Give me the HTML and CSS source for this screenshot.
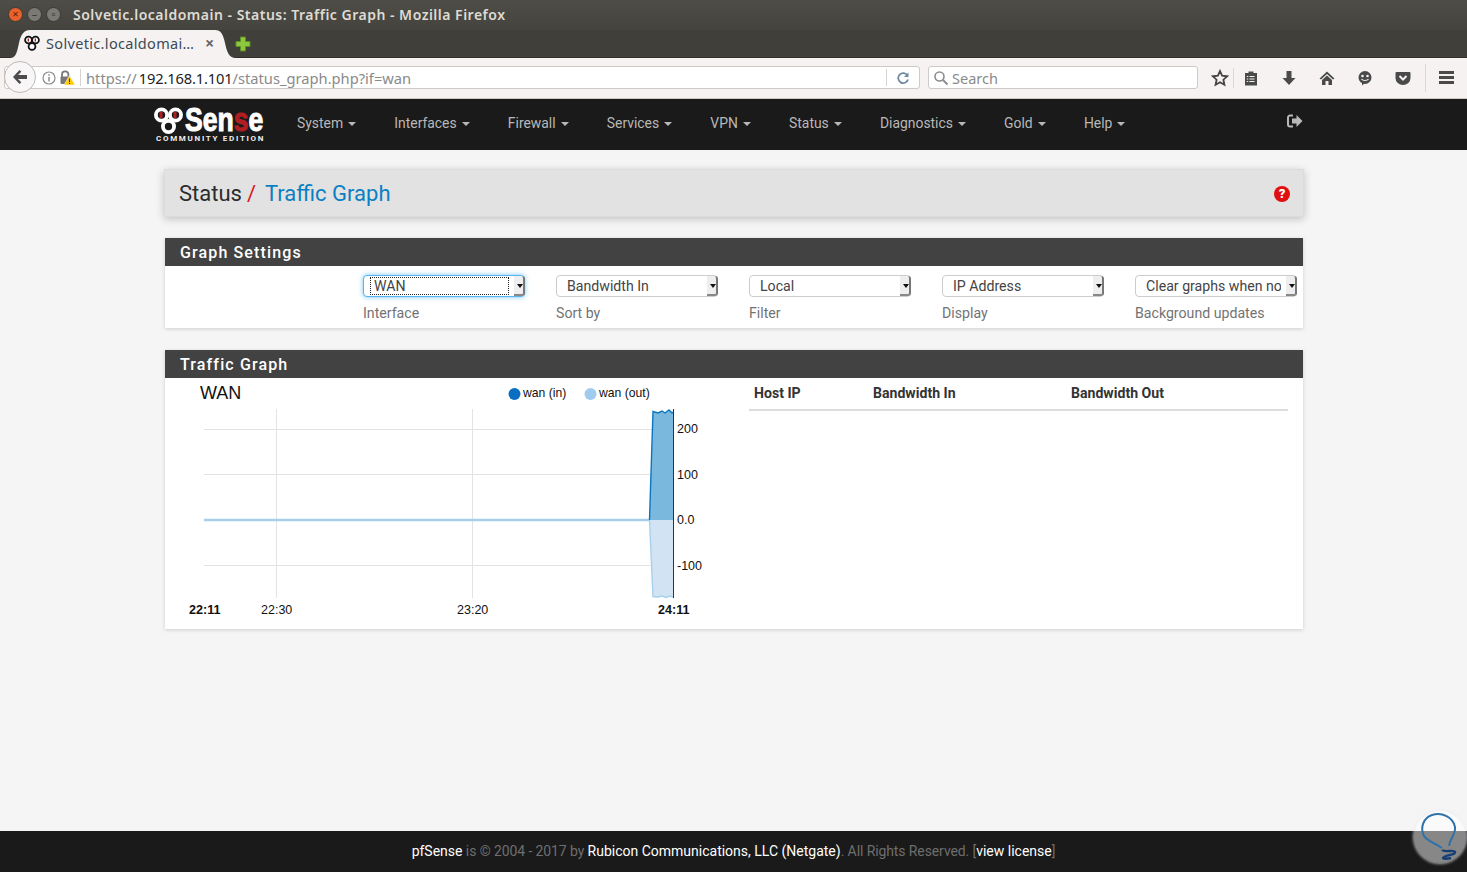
FILE: index.html
```html
<!DOCTYPE html>
<html lang="en">
<head>
<meta charset="utf-8">
<title>Solvetic.localdomain - Status: Traffic Graph</title>
<link rel="stylesheet" href="styles.css">
</head>
<body>
<header class="chrome">
  <div class="titlebar">
    <div class="winbtns">
      <span class="winbtn close">×</span>
      <span class="winbtn">–</span>
      <span class="winbtn">▫</span>
    </div>
    <span class="wintitle">Solvetic.localdomain - Status: Traffic Graph - Mozilla Firefox</span>
  </div>
  <div class="tabstrip">
    <div class="tab">
      <svg class="favicon" viewBox="0 0 16 16" width="16" height="16"><g fill="#fff" stroke="#111" stroke-width="1.8"><circle cx="4.5" cy="5" r="3.4"/><circle cx="11.5" cy="5" r="3.4"/><circle cx="8" cy="11.5" r="3.4"/></g><path d="M4.3 3.5v3M11.3 3.5v3" stroke="#a11" stroke-width="1.3"/></svg>
      <span class="tabtitle">Solvetic.localdomai…</span>
      <span class="tabclose">×</span>
    </div>
    <svg class="newtab" viewBox="0 0 16 16" width="16" height="16"><path d="M5.5 1h5v4.500h4.500v5h-4.500v4.500h-5v-4.500h-4.500v-5h4.500z" fill="#8dc63f" stroke="#5c8f22" stroke-width="1"/></svg>
  </div>
  <div class="toolbar">
    <div class="urlbar">
      <span class="backbtn"><svg viewBox="0 0 18 18" width="18" height="18"><path d="M8.500 2 2 9l6.500 7 1.800-1.800L7 11h9V7H7l3.300-3.200z" fill="#4c4c4c"/></svg></span>
      <svg class="infoicon" viewBox="0 0 14 14" width="14" height="14"><circle cx="7" cy="7" r="6" fill="none" stroke="#8c8c8c" stroke-width="1.200"/><path d="M7 6v4.500M7 3.300v1.500" stroke="#8c8c8c" stroke-width="1.500"/></svg>
      <svg class="lockicon" viewBox="0 0 16 16" width="16" height="16"><path d="M3 7V4.500a3.200 3.200 0 0 1 6.400 0V7" fill="none" stroke="#777" stroke-width="1.800"/><rect x="1.500" y="6.500" width="9" height="7.500" rx="1" fill="#777"/><path d="M10.500 5.500 16 15H5z" fill="#fc0" stroke="#f6f2f2" stroke-width=".6"/><path d="M10.500 8.500v3.500M10.500 12.800v1.200" stroke="#333" stroke-width="1"/></svg>
      <span class="urlsep"></span>
      <span class="urltext">https://<b class="urlhost">192.168.1.101</b>/status_graph.php?if=wan</span>
      <span class="urlsep reloadsep"></span>
      <svg class="reload" viewBox="0 0 14 14" width="14" height="14"><path d="M11.500 4.500A5 5 0 1 0 12 8.500" fill="none" stroke="#6d8aa3" stroke-width="1.800"/><path d="M12.500 1.500v4.500H8z" fill="#6d8aa3"/></svg>
    </div>
    <div class="searchbar">
      <svg viewBox="0 0 16 16" width="16" height="16"><circle cx="6.500" cy="6.500" r="4.500" fill="none" stroke="#8c8c8c" stroke-width="1.600"/><path d="m10 10 4.500 4.500" stroke="#8c8c8c" stroke-width="2"/></svg>
      <span>Search</span>
    </div>
    <div class="tools">
      <svg class="tool star" viewBox="0 0 18 18" width="18" height="18"><path d="m9 2 2.100 4.700 5 .6-3.700 3.400 1 5L9 13.200l-4.400 2.500 1-5L1.900 7.300l5-.6z" fill="none" stroke="#444" stroke-width="1.800"/></svg>
      <span class="toolsep"></span>
      <svg class="tool clip" viewBox="0 0 16 16" width="16" height="16"><path d="M2 3h3.500V1.500h5V3H14v12.500H2z" fill="#4a4a4a"/><path d="M6.500 6.500h5M6.500 9h5M6.500 11.500h5M3.800 6.500h1.500M3.800 9h1.500M3.800 11.500h1.500" stroke="#f6f2f2" stroke-width="1.200"/></svg>
      <svg class="tool down" viewBox="0 0 16 16" width="16" height="16"><path d="M5.500 1h5v7h4L8 15 1.500 8h4z" fill="#4a4a4a"/></svg>
      <svg class="tool home" viewBox="0 0 16 16" width="16" height="16"><path d="M8 1.500 0.500 8.500 2 9.500 8 4l6 5.500 1.500-1z" fill="#4a4a4a"/><path d="M3 10 8 5.500l5 4.500v5H9.500v-4h-3v4H3z" fill="#4a4a4a"/></svg>
      <svg class="tool smile" viewBox="0 0 16 16" width="16" height="16"><circle cx="8" cy="7.500" r="6.500" fill="#4a4a4a"/><circle cx="5.500" cy="6" r="1.300" fill="#f6f2f2"/><circle cx="10.500" cy="6" r="1.300" fill="#f6f2f2"/><path d="M4.500 9c1.500 2 5.500 2 7 0" fill="none" stroke="#f6f2f2" stroke-width="1.200"/><path d="M5 13h3l-3 2.500z" fill="#4a4a4a"/></svg>
      <svg class="tool pocket" viewBox="0 0 16 16" width="16" height="16"><path d="M1.500 2h13a1 1 0 0 1 1 1v5a7.500 7 0 0 1-15 0V3a1 1 0 0 1 1-1z" fill="#4a4a4a"/><path d="m4.500 6 3.500 3.500L11.500 6" fill="none" stroke="#f6f2f2" stroke-width="2"/></svg>
      <span class="toolsep last"></span>
      <span class="hamburger"><i></i><i></i><i></i></span>
    </div>
  </div>
</header>

<nav class="topnav">
  <a class="brand">
    <svg class="brandmark" viewBox="0 0 30 28" width="30" height="28"><g fill="none" stroke="#fff" stroke-width="3.800"><circle cx="7.500" cy="8" r="5.600"/><circle cx="21.500" cy="8" r="5.600"/><circle cx="14.500" cy="19.500" r="5.600"/></g><path d="M7 5v6M21 5v6" stroke="#b01e23" stroke-width="3"/></svg>
    <span class="brandtext">
      <span class="brandname">Sen<em>s</em>e</span>
      <span class="brandsub">COMMUNITY EDITION</span>
    </span>
  </a>
  <ul class="menu">
    <li>System<i class="caret"></i></li>
    <li>Interfaces<i class="caret"></i></li>
    <li>Firewall<i class="caret"></i></li>
    <li>Services<i class="caret"></i></li>
    <li>VPN<i class="caret"></i></li>
    <li>Status<i class="caret"></i></li>
    <li>Diagnostics<i class="caret"></i></li>
    <li>Gold<i class="caret"></i></li>
    <li>Help<i class="caret"></i></li>
  </ul>
  <svg class="logout" viewBox="0 0 16 14" width="16" height="14"><path d="M6 1.500H3a2 2 0 0 0-2 2v7a2 2 0 0 0 2 2h3" fill="none" stroke="#b8b8b8" stroke-width="2"/><path d="M9.500 1 15.500 7l-6 6V9.500H5v-5h4.500z" fill="#b8b8b8"/></svg>
</nav>

<main class="content">
  <div class="crumbs">
    <h1 class="crumbtitle">Status<span class="crumbsep">/</span><a class="crumblink">Traffic Graph</a></h1>
    <span class="help">?</span>
  </div>

  <section class="panel settings">
    <h2 class="panelhead">Graph Settings</h2>
    <div class="fields">
      <label class="field">
        <span class="selectwrap focused"><select class="select"><option>WAN</option></select><i class="dots"></i><i class="arrow"></i></span>
        <span class="hint">Interface</span>
      </label>
      <label class="field">
        <span class="selectwrap"><select class="select"><option>Bandwidth In</option></select><i class="arrow"></i></span>
        <span class="hint">Sort by</span>
      </label>
      <label class="field">
        <span class="selectwrap"><select class="select"><option>Local</option></select><i class="arrow"></i></span>
        <span class="hint">Filter</span>
      </label>
      <label class="field">
        <span class="selectwrap"><select class="select"><option>IP Address</option></select><i class="arrow"></i></span>
        <span class="hint">Display</span>
      </label>
      <label class="field">
        <span class="selectwrap"><select class="select"><option>Clear graphs when not visible</option></select><i class="arrow"></i></span>
        <span class="hint">Background updates</span>
      </label>
    </div>
  </section>

  <section class="panel traffic">
    <h2 class="panelhead">Traffic Graph</h2>
    <div class="trafficbody">
      <svg class="graph" viewBox="165 378 584 251" width="584" height="251">
        <text class="gtitle" x="200" y="399">WAN</text>
        <circle cx="514.500" cy="394" r="6" fill="#0b6fc1"/>
        <text class="gtext" x="523" y="397">wan (in)</text>
        <circle cx="590.500" cy="394" r="6" fill="#a0cbee"/>
        <text class="gtext" x="599" y="397">wan (out)</text>
        <g stroke="#e3e3e3" stroke-width="1">
          <path d="M204 429.500H673M204 474.500H673M204 565.500H673"/>
          <path d="M276.500 409V598M472.500 409V598"/>
        </g>
        <path d="M204 520H650" stroke="#a6cfec" stroke-width="2.500" fill="none"/>
        <path d="M649.500 520 653 411.500 658 413 662 411 665 413 669 410 672 413 673 412V520z" fill="#7ab8dd"/>
        <path d="M649.500 520 653 411.500 658 413 662 411 665 413 669 410 672 413 673 412" fill="none" stroke="#0b76c0" stroke-width="1.400"/>
        <path d="M649.500 520 653 596.500 658 597 662 596 666 597.500 670 596 673 597V520z" fill="#d2e4f4"/>
        <path d="M649.500 520 653 596.500 658 597 662 596 666 597.500 670 596 673 597" fill="none" stroke="#a8d0ec" stroke-width="1.400"/>
        <path d="M673.500 409V598" stroke="#333" stroke-width="1"/>
        <text class="gtext num" x="677" y="433">200</text>
        <text class="gtext num" x="677" y="479">100</text>
        <text class="gtext num" x="677" y="524">0.0</text>
        <text class="gtext num" x="677" y="570">-100</text>
        <text class="gtext bold" x="189" y="614">22:11</text>
        <text class="gtext num" x="261" y="614">22:30</text>
        <text class="gtext num" x="457" y="614">23:20</text>
        <text class="gtext bold" x="658" y="614">24:11</text>
      </svg>
      <table class="hosts">
        <thead>
          <tr><th class="colhost">Host IP</th><th class="colin">Bandwidth In</th><th>Bandwidth Out</th></tr>
        </thead>
      </table>
    </div>
  </section>
</main>

<footer class="footer">
  <span><b>pfSense</b> is © 2004 - 2017 by <b>Rubicon Communications, LLC (Netgate)</b>. All Rights Reserved. [<b>view license</b>]</span>
</footer>

<div class="watermark">
  <svg viewBox="0 0 52 52" width="52" height="52"><path d="M28 37C20 32 12 29 10 25 6 17 9 7 18 4 28 1 39 6 41 16 42 23 36 27 35 35" fill="none" stroke="#2f72ab" stroke-width="2"/><path d="M28 39c3 3 12-1 13 2 1 3-11 3-12 6 0 1 5 1 8 0" fill="none" stroke="#163f74" stroke-width="2.400"/></svg>
</div>
</body>
</html>
```
FILE: styles.css
```css
* { box-sizing: border-box; }
html, body { height: 100%; margin: 0; }
body {
  display: flex;
  flex-direction: column;
  height: 872px;
  overflow: hidden;
  background: #f5f5f5;
  font-family: Roboto, "Liberation Sans", sans-serif;
  font-size: 14px;
  color: #333;
  position: relative;
}

/* Browser chrome */
.chrome { flex: none; font-family: "Noto Sans", "Open Sans", sans-serif; }
.titlebar {
  height: 30px;
  display: flex;
  align-items: center;
  padding: 0 0 2px 8px;
  background: linear-gradient(#4f4d48, #44433e);
}
.winbtns { display: flex; gap: 4px; width: 65px; }
.winbtn {
  width: 15px;
  height: 15px;
  border-radius: 50%;
  background: #7b7a74;
  border: 1px solid #3a3935;
  color: #3a3935;
  font-size: 11px;
  line-height: 12px;
  text-align: center;
}
.winbtn.close { background: #e9622c; color: #5a2000; }
.wintitle { color: #dfdbd2; font-size: 14px; font-weight: 600; white-space: nowrap; letter-spacing: .5px; }
.tabstrip {
  height: 28px;
  display: flex;
  align-items: flex-end;
  padding-left: 10px;
  background: #403f3a;
  border-bottom: 1px solid #2f2e2a;
}
.tab {
  width: 226px;
  height: 28px;
  display: flex;
  align-items: center;
  padding: 0 0 2px 14px;
  background: #f6f2f2;
  clip-path: path("M0 28C6 28 7 22 9 13 11 4 14 0 20 0H205C211 0 213 4 215 13 217 22 219 28 226 28Z");
  margin-bottom: -1px;
}
.favicon { flex: none; }
.tabtitle { margin-left: 6px; font-size: 14.500px; letter-spacing: .33px; color: #3c4a55; white-space: nowrap; width: 150px; overflow: hidden; }
.tabclose { margin-left: 9px; font-size: 16px; font-weight: 700; color: #666; }
.newtab { margin: 0 0 5px -1px; }
.toolbar {
  height: 41px;
  display: flex;
  align-items: center;
  padding: 0 0 1px 4px;
  background: #f6f2f2;
  border-bottom: 1px solid #cfcbc8;
}
.urlbar {
  width: 916px;
  height: 23px;
  display: flex;
  align-items: center;
  background: #fff;
  border: 1px solid #cdcac7;
  border-radius: 3px;
  position: relative;
  padding-left: 36px;
}
.backbtn {
  position: absolute;
  left: -1px;
  top: -6px;
  width: 32px;
  height: 32px;
  display: flex;
  align-items: center;
  justify-content: center;
  background: #f8f6f6;
  border: 1px solid #bdbab8;
  border-radius: 50%;
}
.infoicon { flex: none; margin-left: 1px; }
.lockicon { flex: none; margin-left: 3px; }
.urlsep { width: 1px; height: 17px; background: #d6d3d0; margin-left: 5px; flex: none; }
.urltext { margin-left: 5px; font-size: 14.700px; color: #8a8a8a; white-space: nowrap; flex: 1; }
.urlhost { font-weight: 400; color: #222; margin-left: 2px; letter-spacing: -.15px; }
.reloadsep { margin: 0; }
.reload { flex: none; margin: 0 9px; }
.searchbar {
  width: 270px;
  height: 23px;
  margin-left: 8px;
  display: flex;
  align-items: center;
  gap: 3px;
  padding-left: 4px;
  background: #fff;
  border: 1px solid #cdcac7;
  border-radius: 3px;
  color: #8a8a8a;
  font-size: 14.500px;
}
.tools { display: flex; align-items: center; margin-left: 13px; height: 24px; }
.tool { flex: none; }
.toolsep { width: 1px; height: 20px; background: #dcd8d6; margin: 0 9px 0 4px; }
.toolsep.last { margin: 0 0 0 14px; height: 28px; }
.clip { margin-right: 22px; }
.down { margin-right: 22px; }
.home { margin-right: 22px; }
.smile { margin-right: 22px; }
.hamburger { display: flex; flex-direction: column; gap: 2px; margin-left: 13px; }
.hamburger i { display: block; width: 15px; height: 3px; background: #4a4a4a; }

/* pfSense navbar */
.topnav {
  flex: none;
  height: 51px;
  display: flex;
  align-items: center;
  padding-left: 154px;
  background: #1a1a1a;
  position: relative;
}
.brand { display: flex; width: 143px; height: 44px; padding-top: 4px; }
.brandmark { flex: none; }
.brandtext { display: flex; flex-direction: column; margin-left: -29px; }
.brandname {
  display: block;
  margin: -2px 0 0 30px;
  font-family: "Liberation Sans", sans-serif;
  font-weight: 700;
  font-size: 34px;
  line-height: 28px;
  color: #fff;
  -webkit-text-stroke: 1.100px #fff;
  white-space: nowrap;
  transform: scaleX(.78);
  transform-origin: left;
  height: 29px;
}
.brandname em { font-style: normal; color: #b01e23; -webkit-text-stroke: 1.100px #b01e23; }
.brandsub { font-size: 8px; line-height: 9px; font-weight: 700; letter-spacing: 1.700px; color: #eee; white-space: nowrap; margin-left: 1px; }
.menu { display: flex; gap: 38.200px; margin: 0 0 4px; padding: 0; list-style: none; color: #b8b8b8; font-size: 13.900px; }
.menu li { white-space: nowrap; }
.caret {
  display: inline-block;
  margin-left: 5px;
  vertical-align: 2px;
  border-top: 4px solid #b8b8b8;
  border-left: 4px solid transparent;
  border-right: 4px solid transparent;
}
.logout { position: absolute; left: 1287px; top: 15px; }

/* Content */
.content { flex: 1; width: 1138px; margin-left: 165px; padding-top: 19px; }
.crumbs {
  height: 48px;
  margin: 0 -1px 21px;
  padding: 0 13px 0 14px;
  display: flex;
  align-items: center;
  justify-content: space-between;
  background: #e2e2e2;
  border: 1px solid #dcdcdc;
  box-shadow: 0 2px 8px rgba(0, 0, 0, .22);
}
.crumbtitle { margin: 0; font-size: 22px; font-weight: 400; color: #2c2c2c; white-space: nowrap; }
.crumbsep { color: #d81a1a; margin: 0 9px 0 5px; }
.crumblink { color: #0a80c2; }
.help {
  width: 16px;
  height: 16px;
  margin-top: 1px;
  border-radius: 50%;
  background: #e10f0f;
  color: #fff;
  font-size: 13px;
  font-weight: 900;
  line-height: 16px;
  text-align: center;
}
.panel { background: #fff; box-shadow: 0 1px 4px rgba(0, 0, 0, .16); margin-bottom: 22px; }
.panelhead {
  height: 28px;
  margin: 0;
  padding-left: 15px;
  background: #424242;
  color: #fff;
  font-size: 16px;
  font-weight: 500;
  line-height: 29px;
  letter-spacing: 1.130px;
}
.fields { height: 62px; display: flex; gap: 31px; padding: 9px 0 0 198px; }
.field { width: 162px; display: flex; flex-direction: column; }
.selectwrap { position: relative; display: block; height: 22px; }
.select {
  display: block;
  appearance: none;
  -moz-appearance: none;
  width: 162px;
  height: 22px;
  padding: 0 15px 0 10px;
  background: #fff;
  border: 1px solid #ccc;
  border-radius: 4px;
  color: #444;
  font-family: Roboto, sans-serif;
  font-size: 14.150px;
}
.focused .select { border-color: #56b5f0; box-shadow: 0 0 5px rgba(60, 170, 240, .7); }
.dots {
  position: absolute;
  left: 7px;
  top: 2px;
  width: 139px;
  height: 18px;
  border: 1px dotted #222;
  pointer-events: none;
}
.arrow {
  position: absolute;
  right: 0;
  top: 1px;
  width: 11px;
  height: 20px;
  background: #eee;
  border-right: 2px solid #777;
  border-bottom: 2px solid #888;
  border-radius: 0 3px 3px 0;
  pointer-events: none;
}
.arrow::after {
  content: "";
  position: absolute;
  left: 3px;
  top: 8px;
  border-top: 4px solid #111;
  border-left: 3px solid transparent;
  border-right: 3px solid transparent;
}
.hint { margin-top: 8px; color: #737373; font-size: 14.150px; line-height: 16px; }
.trafficbody { height: 251px; display: flex; }
.graph { flex: none; display: block; }
.gtitle { font-family: "Liberation Sans", sans-serif; font-size: 18px; fill: #111; }
.gtext { font-family: "Liberation Sans", sans-serif; font-size: 12.200px; fill: #111; }
.num { font-size: 12.500px; }
.bold { font-weight: 700; font-size: 12.600px; }
.hosts { width: 539px; height: 32px; border-collapse: collapse; }
.hosts th {
  padding: 0 5px 2px;
  height: 32px;
  border-bottom: 2px solid #ddd;
  text-align: left;
  font-size: 14.100px;
  font-weight: 700;
  color: #333;
}
.colhost { width: 119px; }
.colin { width: 198px; }

/* Footer */
.footer {
  flex: none;
  height: 41px;
  display: flex;
  align-items: center;
  justify-content: center;
  padding-bottom: 2px;
  background: #1a1a1a;
  color: #6e6e6e;
  font-size: 14px;
  letter-spacing: -.1px;
}
.footer b { font-weight: 400; color: #fff; letter-spacing: 0; }
.watermark {
  position: absolute;
  left: 1414px;
  top: 811px;
  width: 52px;
  height: 52px;
  border-radius: 50%;
  background: rgba(255, 255, 255, .48);
  box-shadow: 0 0 3px 1px rgba(235, 235, 245, .7);
}
.watermark svg { display: block; }
```
